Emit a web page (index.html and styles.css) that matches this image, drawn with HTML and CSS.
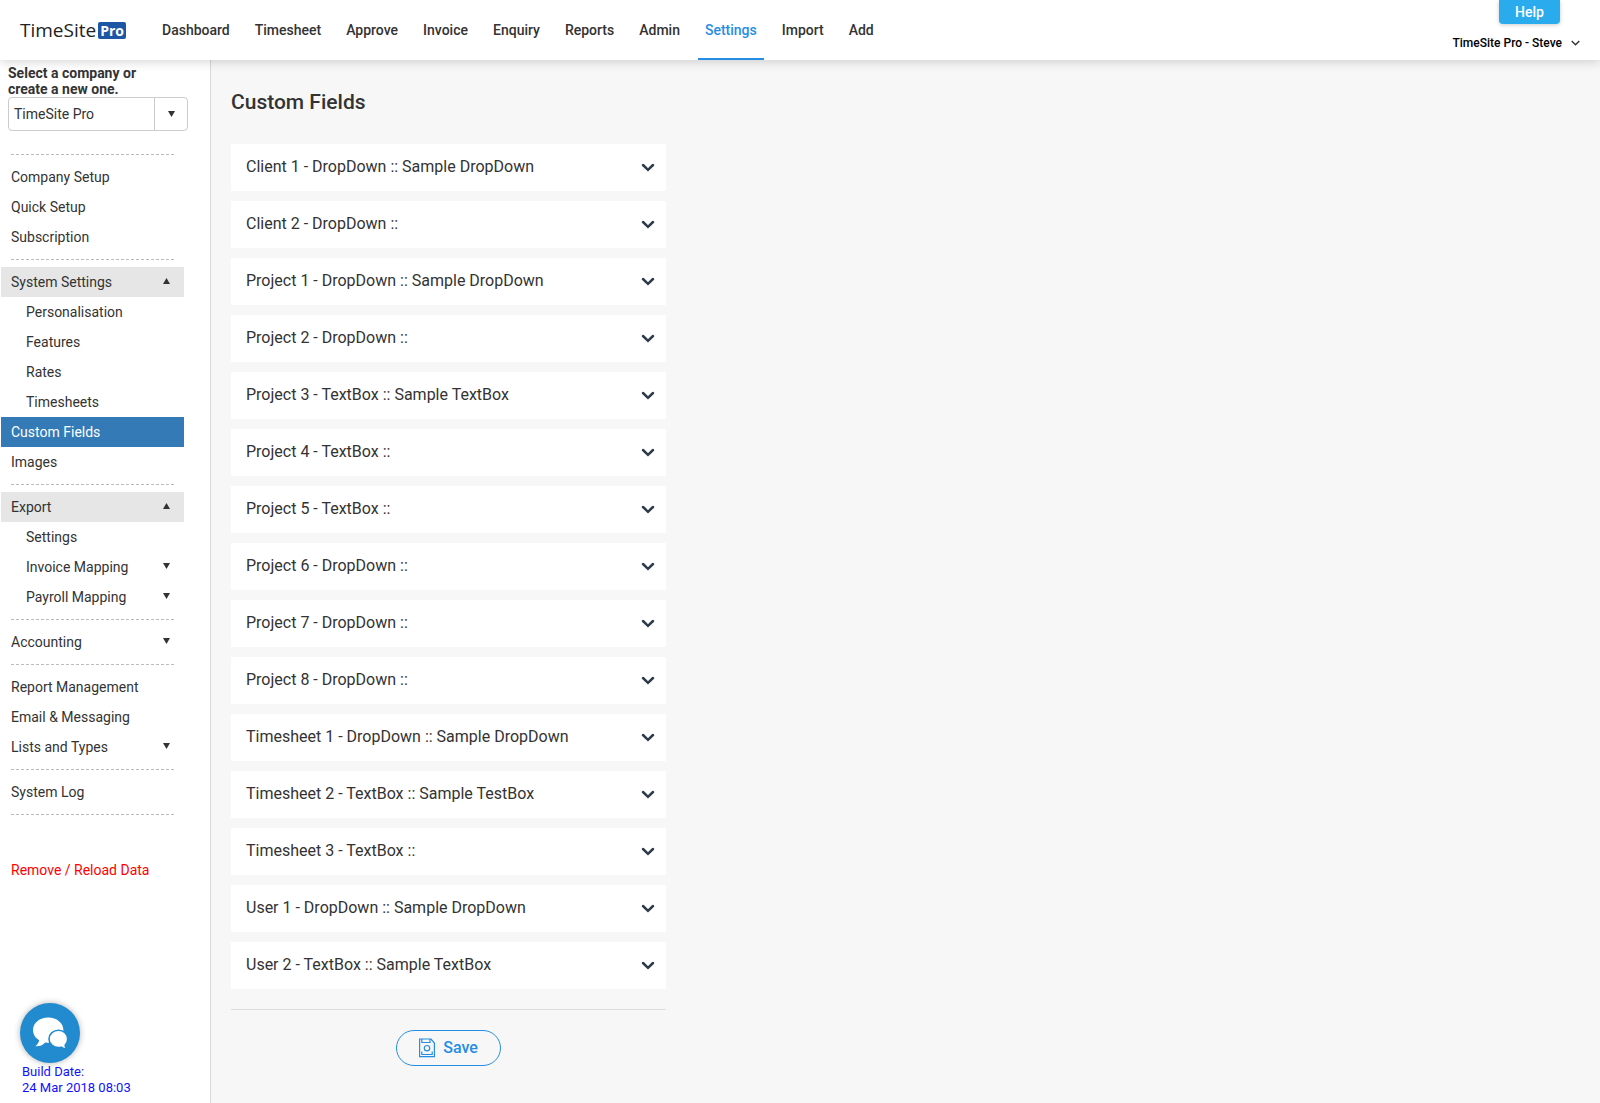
FILE: index.html
```html
<!DOCTYPE html>
<html lang="en">
<head>
<meta charset="utf-8">
<title>TimeSite Pro - Custom Fields</title>
<link rel="stylesheet" href="styles.css">
</head>
<body>
<svg class="sprite" aria-hidden="true">
  <symbol id="chevron" viewBox="0 0 14 9"><path d="M2 2 7 6.800 12 2" fill="none" stroke="currentColor" stroke-width="2.500" stroke-linecap="round"/></symbol>
  <symbol id="up" viewBox="0 0 7 6"><path d="M0 6 3.500 0 7 6Z" fill="currentColor"/></symbol>
  <symbol id="down" viewBox="0 0 7 6"><path d="M0 0H7L3.500 6Z" fill="currentColor"/></symbol>
</svg>
<header class="topbar">
  <a class="logo" href="#"><span class="logo-name">TimeSite</span><span class="logo-tag">Pro</span></a>
  <nav class="menu">
    <a href="#">Dashboard</a>
    <a href="#">Timesheet</a>
    <a href="#">Approve</a>
    <a href="#">Invoice</a>
    <a href="#">Enquiry</a>
    <a href="#">Reports</a>
    <a href="#">Admin</a>
    <a href="#" class="current">Settings</a>
    <a href="#">Import</a>
    <a href="#">Add</a>
  </nav>
  <div class="account">
    <button type="button" class="help">Help</button>
    <button type="button" class="user">TimeSite Pro - Steve
      <svg width="9" height="6" viewBox="0 0 9 6"><path d="M.7.9 4.500 4.700 8.300.9" fill="none" stroke="#333" stroke-width="1.400"/></svg>
    </button>
  </div>
</header>
<div class="layout">
  <aside class="sidebar">
    <div class="company">
      <label for="company">Select a company or create a new one.</label>
      <div class="combo">
        <input id="company" type="text" value="TimeSite Pro">
        <button type="button" aria-label="Show companies"><svg class="arrow" width="7" height="6"><use href="#down"/></svg></button>
      </div>
    </div>
    <nav class="side-menu">
      <hr>
      <a href="#">Company Setup</a>
      <a href="#">Quick Setup</a>
      <a href="#">Subscription</a>
      <hr>
      <a href="#" class="open">System Settings<svg class="arrow" width="7" height="6"><use href="#up"/></svg></a>
      <a href="#" class="sub">Personalisation</a>
      <a href="#" class="sub">Features</a>
      <a href="#" class="sub">Rates</a>
      <a href="#" class="sub">Timesheets</a>
      <a href="#" class="selected">Custom Fields</a>
      <a href="#">Images</a>
      <hr>
      <a href="#" class="open">Export<svg class="arrow" width="7" height="6"><use href="#up"/></svg></a>
      <a href="#" class="sub">Settings</a>
      <a href="#" class="sub">Invoice Mapping<svg class="arrow" width="7" height="6"><use href="#down"/></svg></a>
      <a href="#" class="sub">Payroll Mapping<svg class="arrow" width="7" height="6"><use href="#down"/></svg></a>
      <hr>
      <a href="#">Accounting<svg class="arrow" width="7" height="6"><use href="#down"/></svg></a>
      <hr>
      <a href="#">Report Management</a>
      <a href="#">Email &amp; Messaging</a>
      <a href="#">Lists and Types<svg class="arrow" width="7" height="6"><use href="#down"/></svg></a>
      <hr>
      <a href="#">System Log</a>
      <hr>
      <a href="#" class="danger">Remove / Reload Data</a>
    </nav>
    <div class="side-foot">
      <button type="button" class="chat" aria-label="Chat">
        <svg width="36" height="32" viewBox="0 0 36 32" fill="#fff">
          <path d="M16.200 .5C7.700.5 1 6 1 13c0 4.300 2.400 8 6.200 10.300-.5 2.400-1.800 4.400-3.800 6 3.900.2 7.400-1 9.700-3.800 1 .2 2 .2 3.100.2C24.700 25.700 31.400 20 31.400 13S24.700.5 16.200.5Z"/>
          <path d="M26.500 13.200c-5 0-9.500 3.800-9.500 8.700s4.500 8.700 9.500 8.700c1 0 1.800-.1 2.700-.4 1.600 1.200 3.500 1.800 6 1.700-1-1.100-1.900-2.300-2.100-3.600 1.700-1.600 2.600-3.700 2.600-6.400 0-4.900-4.200-8.700-9.200-8.700Z" stroke="#228bcf" stroke-width="1.600"/>
        </svg>
      </button>
      <p>Build Date:<br>24 Mar 2018 08:03</p>
    </div>
  </aside>
  <main class="content">
    <h1>Custom Fields</h1>
    <form class="fields">
      <button type="button" class="field">Client 1 - DropDown :: Sample DropDown<svg width="14" height="9"><use href="#chevron"/></svg></button>
      <button type="button" class="field">Client 2 - DropDown ::<svg width="14" height="9"><use href="#chevron"/></svg></button>
      <button type="button" class="field">Project 1 - DropDown :: Sample DropDown<svg width="14" height="9"><use href="#chevron"/></svg></button>
      <button type="button" class="field">Project 2 - DropDown ::<svg width="14" height="9"><use href="#chevron"/></svg></button>
      <button type="button" class="field">Project 3 - TextBox :: Sample TextBox<svg width="14" height="9"><use href="#chevron"/></svg></button>
      <button type="button" class="field">Project 4 - TextBox ::<svg width="14" height="9"><use href="#chevron"/></svg></button>
      <button type="button" class="field">Project 5 - TextBox ::<svg width="14" height="9"><use href="#chevron"/></svg></button>
      <button type="button" class="field">Project 6 - DropDown ::<svg width="14" height="9"><use href="#chevron"/></svg></button>
      <button type="button" class="field">Project 7 - DropDown ::<svg width="14" height="9"><use href="#chevron"/></svg></button>
      <button type="button" class="field">Project 8 - DropDown ::<svg width="14" height="9"><use href="#chevron"/></svg></button>
      <button type="button" class="field">Timesheet 1 - DropDown :: Sample DropDown<svg width="14" height="9"><use href="#chevron"/></svg></button>
      <button type="button" class="field">Timesheet 2 - TextBox :: Sample TestBox<svg width="14" height="9"><use href="#chevron"/></svg></button>
      <button type="button" class="field">Timesheet 3 - TextBox ::<svg width="14" height="9"><use href="#chevron"/></svg></button>
      <button type="button" class="field">User 1 - DropDown :: Sample DropDown<svg width="14" height="9"><use href="#chevron"/></svg></button>
      <button type="button" class="field">User 2 - TextBox :: Sample TextBox<svg width="14" height="9"><use href="#chevron"/></svg></button>
      <div class="actions">
        <button type="submit" class="save">
          <svg width="16" height="20" viewBox="0 0 16 20" fill="none" stroke="currentColor" stroke-width="1.200"><path d="M.6 1H12L15.400 5V18.700H.6ZM2.800 1V4.500H11V1M2.800 13.500v3H13.200V13.500"/><circle cx="8" cy="10.200" r="2.700"/></svg>
          Save
        </button>
      </div>
    </form>
  </main>
</div>
</body>
</html>
```
FILE: styles.css
```css
* {
  box-sizing: border-box;
}

body {
  margin: 0;
  min-height: 100vh;
  display: flex;
  flex-direction: column;
  font: 14px/16px Roboto, "Liberation Sans", sans-serif;
  color: #333;
  background: #f7f7f7;
}

a {
  color: inherit;
  text-decoration: none;
}

button,
input {
  font: inherit;
  color: inherit;
  border: 0;
  padding: 0;
  margin: 0;
  background: none;
}

.sprite {
  display: none;
}

.arrow {
  margin-bottom: 2px;
}

.topbar {
  position: relative;
  z-index: 1;
  display: flex;
  height: 60px;
  padding: 0 20px;
  background: #fff;
  box-shadow: 0 2px 10px rgba(0, 0, 0, 0.16);
}

.logo {
  display: flex;
  align-items: center;
  gap: 2px;
  width: 135px;
  font-family: "Open Sans", sans-serif;
  color: #222;
}

.logo-name {
  font-size: 19px;
}

.logo-tag {
  padding: 0 2px;
  border-radius: 2px;
  background: #1d56a5;
  color: #fff;
  font-size: 14px;
  font-weight: 700;
  line-height: 17px;
}

.menu {
  display: flex;
  gap: 11px;
}

.menu a {
  padding: 0 7px;
  font-weight: 500;
  line-height: 60px;
}

.menu .current {
  color: #258de4;
  border-bottom: 2px solid #258de4;
}

.account {
  display: flex;
  flex-direction: column;
  align-items: flex-end;
  gap: 11px;
  margin-left: auto;
  font-weight: 500;
}

.help {
  width: 61px;
  height: 24px;
  margin-right: 20px;
  border-radius: 0 0 4px 4px;
  background: #2aabee;
  box-shadow: 0 1px 4px rgba(0, 0, 0, 0.2);
  color: #fff;
}

.user {
  display: flex;
  align-items: center;
  gap: 9px;
  font-size: 12px;
  color: #000;
}

.layout {
  flex: 1;
  display: flex;
}

.sidebar {
  flex: none;
  display: flex;
  flex-direction: column;
  width: 211px;
  padding-top: 5px;
  border-right: 1px solid #d8d8d8;
  background: #fff;
}

.company {
  width: 188px;
  padding-left: 8px;
}

.company label {
  display: block;
  width: 140px;
  font-weight: 700;
}

.combo {
  display: flex;
  height: 34px;
  border: 1px solid #ccc;
  border-radius: 4px;
}

.combo input {
  flex: 1;
  min-width: 0;
  padding: 0 5px;
}

.combo button {
  width: 33px;
  border-left: 1px solid #ccc;
}

.side-menu {
  width: 184px;
  padding: 16px 0 0 1px;
}

.side-menu hr {
  height: 1px;
  margin: 7px 10px;
  border: 0;
  border-top: 1px dashed #bbb;
}

.side-menu a {
  display: flex;
  align-items: center;
  justify-content: space-between;
  height: 30px;
  padding: 0 14px 0 10px;
}

.side-menu .sub {
  padding-left: 25px;
}

.side-menu .open {
  background: #e6e6e6;
}

.side-menu .selected {
  background: #337ab7;
  color: #fff;
}

.side-menu .danger {
  margin-top: 40px;
  color: #f00;
}

.side-foot {
  margin-top: auto;
  padding: 0 0 7px 20px;
  font-size: 13px;
  color: #11f;
}

.side-foot p {
  margin: 1px 2px 0;
}

.chat {
  display: flex;
  align-items: center;
  justify-content: center;
  width: 60px;
  height: 60px;
  border-radius: 50%;
  background: #228bcf;
  box-shadow: 0 0 6px rgba(0, 0, 0, 0.3);
}

.content {
  flex: 1;
  padding: 30px 20px;
}

.content h1 {
  margin: 0 0 30px;
  font-size: 21px;
  font-weight: 500;
  line-height: 24px;
}

.fields {
  display: flex;
  flex-direction: column;
  gap: 10px;
  max-width: 435px;
}

.field {
  display: flex;
  align-items: center;
  justify-content: space-between;
  height: 47px;
  padding: 0 11px 1px 15px;
  background: #fff;
  font-size: 16px;
}

.field svg {
  color: #2d3a4b;
}

.actions {
  display: flex;
  justify-content: center;
  margin-top: 10px;
  padding-top: 20px;
  border-top: 1px solid #ddd;
}

.save {
  display: flex;
  align-items: center;
  justify-content: center;
  gap: 8px;
  width: 105px;
  height: 36px;
  border: 1px solid #258de4;
  border-radius: 18px;
  color: #258de4;
  font-size: 16px;
  font-weight: 500;
}
```
